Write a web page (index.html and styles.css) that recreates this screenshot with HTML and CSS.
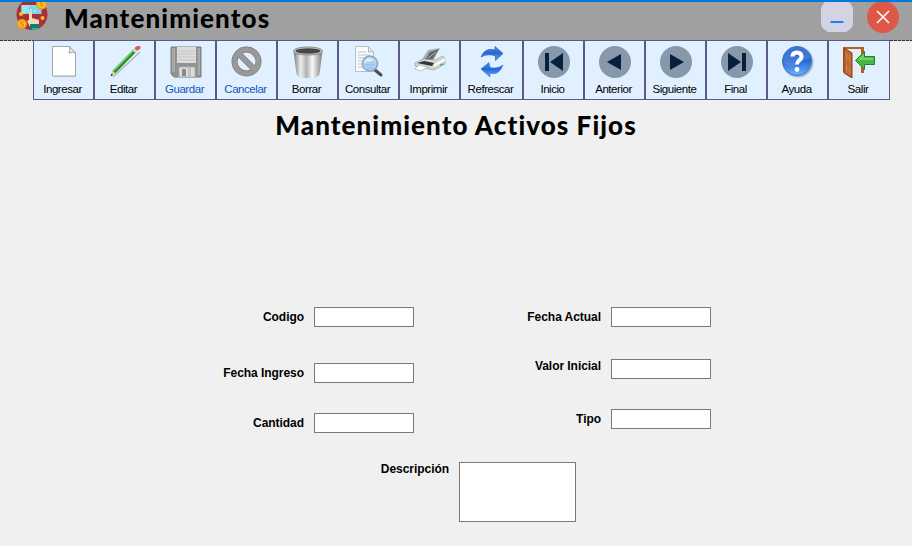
FILE: index.html
```html
<!DOCTYPE html>
<html lang="es">
<head>
<meta charset="utf-8">
<title>Mantenimientos</title>
<link rel="stylesheet" href="styles.css">
</head>
<body>
<header class="titlebar">
  <svg class="logo" width="32" height="30" viewBox="0 0 32 30">
    <circle cx="16" cy="12.500" r="15.500" fill="#aa3036"/>
    <path d="M5.500 3h20v9h-20z" fill="#7fd6e6"/><path d="M5.500 3h8l-4 9h-4z" fill="#9be5ee"/>
    <path d="M11 9h2M15 7v2M18 9h2" stroke="#e8ffff"/>
    <path d="M13 10q1.500-1.500 3 0v6l7 2v5l-2 2h-7l-3-6 2-1z" fill="#f8d9b6"/>
    <path d="M14 22h9v4l-4 2h-5z" fill="#127a78"/><path d="M16 26h6v1l-5 1z" fill="#3cc46c"/>
    <circle cx="25.500" cy="2" r="5.500" fill="#f29b13"/><circle cx="25.500" cy="2" r="4" fill="#ffc02d"/>
    <path d="M27.500 0h-3v2h2v2h-3" fill="none" stroke="#e48809"/>
    <circle cx="6" cy="22" r="5" fill="#f29b13"/><circle cx="6" cy="22" r="3.600" fill="#ffbd28"/>
    <path d="M7.500 20h-3v2h3v2h-3" fill="none" stroke="#df8408"/>
    <circle cx="5" cy="12" r="2" fill="#ffbd28"/><circle cx="26.500" cy="16" r="2" fill="#ffbd28"/>
  </svg>
  <h1 class="app-title">Mantenimientos</h1>
  <div class="win-buttons">
    <svg width="32" height="30" viewBox="0 0 32 30"><path d="M4 0h24l2 2 2 4v14q0 6-4 8l-3 2H7l-3-2q-4-2-4-8V6l2-4z" fill="#d4d3e3"/><path d="M9.500 20h13" stroke="#237df2" stroke-width="2"/></svg>
    <svg width="32" height="31" viewBox="0 0 32 31"><circle cx="16" cy="15" r="16" fill="#dd5847"/><path d="M10 9l12 12M22 9L10 21" stroke="#fff" stroke-width="1.500"/></svg>
  </div>
</header>

<nav class="toolbar-row">
  <div class="rail"></div>
  <div class="toolbar">
    <div class="tool"><svg viewBox="0 0 32 32"><path d="M6 2h15l7 7v22H6z" fill="#aebdca" opacity=".7"/><path d="M4.500 .5h17L27.500 7v23h-23z" fill="#fff" stroke="#a2a8ad"/><path d="M21.500 .5q1 4-.5 6.500 4-1.500 6.500 0z" fill="#e9ecee" stroke="#a2a8ad"/></svg><span>Ingresar</span></div>
    <div class="tool"><svg viewBox="0 0 32 32"><path d="M4 31L31 6" stroke="#a8bac8" stroke-width="1.500"/><path d="M1.500 30.500l2-6 3 3z" fill="#efc986"/><path d="M1.500 30.500l1-3 1.500 1.500z" fill="#342f2b"/><path d="M5 26L25.500 5" stroke="#2b8b2d" stroke-width="3.800"/><path d="M4.500 25L25 4" stroke="#6dd663" stroke-width="1.300"/><path d="M25 5.500l3-3" stroke="#d7dce0" stroke-width="4"/><path d="M28 2.500l1.500-1" stroke="#d75c61" stroke-width="4" stroke-linecap="round"/></svg><span>Editar</span></div>
    <div class="tool off"><svg viewBox="0 0 32 32"><path d="M1 1h30v30H4l-3-3z" fill="#929292" stroke="#7c7c7c"/><path d="M2 2h3v24H2zM28 2h2v27h-2z" fill="#aaa"/><path d="M7 1h19v16H7z" fill="#ddd"/><path d="M8 5h17M8 8h17M8 11h17M8 14h17" stroke="#c4c4c4"/><path d="M9 21h16v10H9z" fill="#ddd" stroke="#aaa"/><path d="M12 23h4v7h-4z" fill="#898989"/><path d="M18 22h3v8h-3z" fill="#c1c1c1"/></svg><span>Guardar</span></div>
    <div class="tool off"><svg viewBox="0 0 32 32"><circle cx="15.500" cy="15.500" r="12" fill="none" stroke="#7d7d7d" stroke-width="6"/><path d="M7 7l17 17" stroke="#7d7d7d" stroke-width="6"/><circle cx="15.500" cy="15.500" r="12" fill="none" stroke="#999" stroke-width="4.500"/><path d="M7 7l17 17" stroke="#999" stroke-width="4.500"/></svg><span>Cancelar</span></div>
    <div class="tool"><svg viewBox="0 0 32 32"><defs><linearGradient id="metal"><stop stop-color="#777"/><stop offset=".25" stop-color="#eee"/><stop offset=".45" stop-color="#b1b1b1"/><stop offset=".65" stop-color="#f8f8f8"/><stop offset="1" stop-color="#7c7c7c"/></linearGradient></defs><path d="M1.500 5l3 23q1 4 11.500 4t11.500-4l3-23z" fill="url(#metal)"/><ellipse cx="16" cy="5" rx="14.500" ry="4" fill="#d2d2d2" stroke="#888"/><ellipse cx="16" cy="5" rx="12.500" ry="2.700" fill="#474747"/></svg><span>Borrar</span></div>
    <div class="tool"><svg viewBox="0 0 32 32"><path d="M2.500 .5h13l5 5v20h-18z" fill="#f8fbfd" stroke="#b6c0c7"/><path d="M15.500 1v5h5" fill="#e1e5e8" stroke="#aeb7bc"/><path d="M5 6h8M5 9h12M5 12h8M5 15h6M5 18h6M5 21h9" stroke="#b6c3d3"/><path d="M22 24l6 5" stroke="#4b4e52" stroke-width="3" stroke-linecap="round"/><circle cx="17" cy="17.500" r="7.500" fill="#b5d4f5" stroke="#91a3bd" stroke-width="1.600"/><path d="M12 16h9M12 19h10M14 22h6" stroke="#83b0e6" fill="none"/><path d="M11 17q1-5 6-5l5 3z" fill="#e8f6ff" opacity=".7"/></svg><span>Consultar</span></div>
    <div class="tool"><svg viewBox="0 0 32 32"><path d="M7 15L14 4l12-2-7 13z" fill="#a8adb1"/><path d="M11 14l5-8 9-3-7 11z" fill="#5f656a"/><path d="M14 12l8-6" stroke="#aeb5ba"/><path d="M1 17l8-4 12 1 8-4 2 2v6l-11 6L1 20z" fill="#d2d4d1" stroke="#9fa49f" stroke-width=".7"/><path d="M3 17l7-2 10 2-2 3z" fill="#30343a"/><path d="M20 18l11-6v3l-11 6z" fill="#f8f8f4"/><path d="M5 19l9 2-7 4-6-2z" fill="#fff" stroke="#a6adb0" stroke-width=".7"/><path d="M26 19l3-1" stroke="#56ae54" stroke-width="1.500"/></svg><span>Imprimir</span></div>
    <div class="tool wide"><svg viewBox="0 0 32 32"><defs><linearGradient id="arrows" x2="0" y2="1"><stop stop-color="#5994ed"/><stop offset=".45" stop-color="#2865cf"/><stop offset="1" stop-color="#66adff"/></linearGradient></defs><path d="M5 11Q9 1 19 4V.5l8 7-7.500 7v-4.500Q12 7 5 11z" fill="url(#arrows)" stroke="#1b65ca" stroke-width=".7"/><path d="M27 19q-4 11-13 8v4l-9-8 8-6.500 1 5q7 2 13-2.500z" fill="url(#arrows)" stroke="#327cd7" stroke-width=".7"/></svg><span>Refrescar</span></div>
    <div class="tool"><svg viewBox="0 0 32 32"><circle cx="16" cy="16" r="16" fill="#8798aa"/><path d="M7 7h4v18H7zM25 7v18L12 16z" fill="#07203d"/></svg><span>Inicio</span></div>
    <div class="tool"><svg viewBox="0 0 32 32"><circle cx="16" cy="16" r="16" fill="#8798aa"/><path d="M22 8v16L8 16z" fill="#07203d"/></svg><span>Anterior</span></div>
    <div class="tool"><svg viewBox="0 0 32 32"><circle cx="16" cy="16" r="16" fill="#8798aa"/><path d="M10 8v16l14-8z" fill="#07203d"/></svg><span>Siguiente</span></div>
    <div class="tool"><svg viewBox="0 0 32 32"><circle cx="16" cy="16" r="16" fill="#8798aa"/><path d="M7 7v18l13-9zM21 7h4v18h-4z" fill="#07203d"/></svg><span>Final</span></div>
    <div class="tool"><svg viewBox="0 0 32 32"><defs><linearGradient id="help" x2="0" y2="1"><stop stop-color="#2159c3"/><stop offset=".5" stop-color="#2869d5"/><stop offset="1" stop-color="#68b4ff"/></linearGradient></defs><circle cx="16" cy="16" r="15.500" fill="#a9bad0"/><circle cx="15" cy="15" r="14.500" fill="url(#help)" stroke="#3e70bc"/><path d="M1.500 15Q2 1 15 1t13 12Q20 13 15 18T2 17z" fill="#8db5f0" opacity=".25"/><path d="M10.500 10.500q0-4 4.500-4t4.500 4q0 2.500-2.500 4-2 1.500-2 4" fill="none" stroke="#fff" stroke-width="4"/><circle cx="15" cy="23.500" r="2.400" fill="#fff"/></svg><span>Ayuda</span></div>
    <div class="tool"><svg viewBox="0 0 32 32"><path d="M0 1h21v26h-3V4H4v22H0z" fill="#b75e29"/><path d="M3 3h15v23H9z" fill="#e8edf1"/><path d="M1 2l8 5v25l-8-5z" fill="#bf6a2d" stroke="#823d1c"/><path d="M3 6l1.500 1v8L3 14zM6 8l1.500 1v8L6 16zM3 18l1.500 1v7L3 25zM6 20l1.500 1v7L6 27z" fill="#dc8e4c" stroke="#ad6030" stroke-width=".5"/><path d="M12.500 14.500l9-9v5h10v8h-10v5z" fill="#49b744" stroke="#238126"/><path d="M14 14l7-6v4h9v2z" fill="#83dc74" opacity=".7"/></svg><span>Salir</span></div>
  </div>
  <div class="rail"></div>
</nav>

<main>
  <h2 class="page-title">Mantenimiento Activos Fijos</h2>
  <form class="form">
    <div class="columns">
      <div class="col left">
        <label class="field"><span>Codigo</span><input type="text"></label>
        <label class="field ingreso"><span>Fecha Ingreso</span><input type="text"></label>
        <label class="field last"><span>Cantidad</span><input type="text"></label>
      </div>
      <div class="col right">
        <label class="field"><span>Fecha Actual</span><input type="text"></label>
        <label class="field valor"><span>Valor Inicial</span><input type="text"></label>
        <label class="field last"><span>Tipo</span><input type="text"></label>
      </div>
    </div>
    <label class="field description"><span>Descripción</span><textarea></textarea></label>
  </form>
</main>
</body>
</html>
```
FILE: styles.css
```css
* { box-sizing: border-box; }
body { margin: 0; width: 912px; height: 546px; overflow: hidden; background: #f0f0f0; color: #000; font-family: "Liberation Sans", Arial, sans-serif; }
h1, h2 { margin: 0; font-family: Lato, "Century Gothic", sans-serif; font-weight: 900; font-size: 26px; line-height: 32px; white-space: nowrap; }
.titlebar { height: 40px; border-top: 2px solid #0078d7; background: #a0a0a0; display: flex; align-items: flex-start; padding: 0 13px 0 16px; }
.logo { display: block; }
.app-title { margin-left: 16px; letter-spacing: 1.100px; }
.win-buttons { margin-left: auto; display: flex; gap: 14px; }
.toolbar-row { display: flex; height: 60px; }
.rail { height: 1px; width: 33px; background: repeating-linear-gradient(90deg, #333 0 3px, #aaa 3px 4px); }
.rail:last-child { flex: 1; }
.toolbar { display: flex; border: 1px solid #5b5789; border-width: 1px 1px 1px 0; background: #e0f0ff; }
.tool { width: 61px; padding-top: 5px; border: solid #5b5789; border-width: 0 1px; display: flex; flex-direction: column; align-items: center; font-size: 11.500px; line-height: 13px; letter-spacing: -.45px; }
.tool:last-child { border-right-width: 0; }
.tool.wide { width: 63px; }
.tool svg { display: block; width: 32px; height: 32px; }
.tool span { margin: 5px 2px 0 0; white-space: nowrap; }
.off { color: #1259b7; }
.page-title { padding-top: 9px; height: 42px; text-align: center; letter-spacing: 1.070px; }
.form { padding-top: 165px; }
.columns { display: flex; height: 126px; }
.col { display: flex; flex-direction: column; align-items: flex-end; }
.left { width: 414px; }
.right { width: 297px; }
.field { display: flex; align-items: center; gap: 10px; font-size: 12px; font-weight: bold; line-height: 20px; letter-spacing: -.05px; }
.field input { width: 100px; height: 20px; margin: 0; border: 1px solid #7a7a7a; background: #fff; }
.ingreso { margin-top: 36px; }
.valor { margin-top: 32px; }
.valor span { margin-top: -6px; }
.last { margin-top: 30px; }
.description { width: 576px; margin-top: 29px; justify-content: flex-end; align-items: flex-start; }
.description span { margin-top: -3px; }
.description textarea { width: 117px; height: 60px; margin: 0; border: 1px solid #7a7a7a; background: #fff; resize: none; }
```
